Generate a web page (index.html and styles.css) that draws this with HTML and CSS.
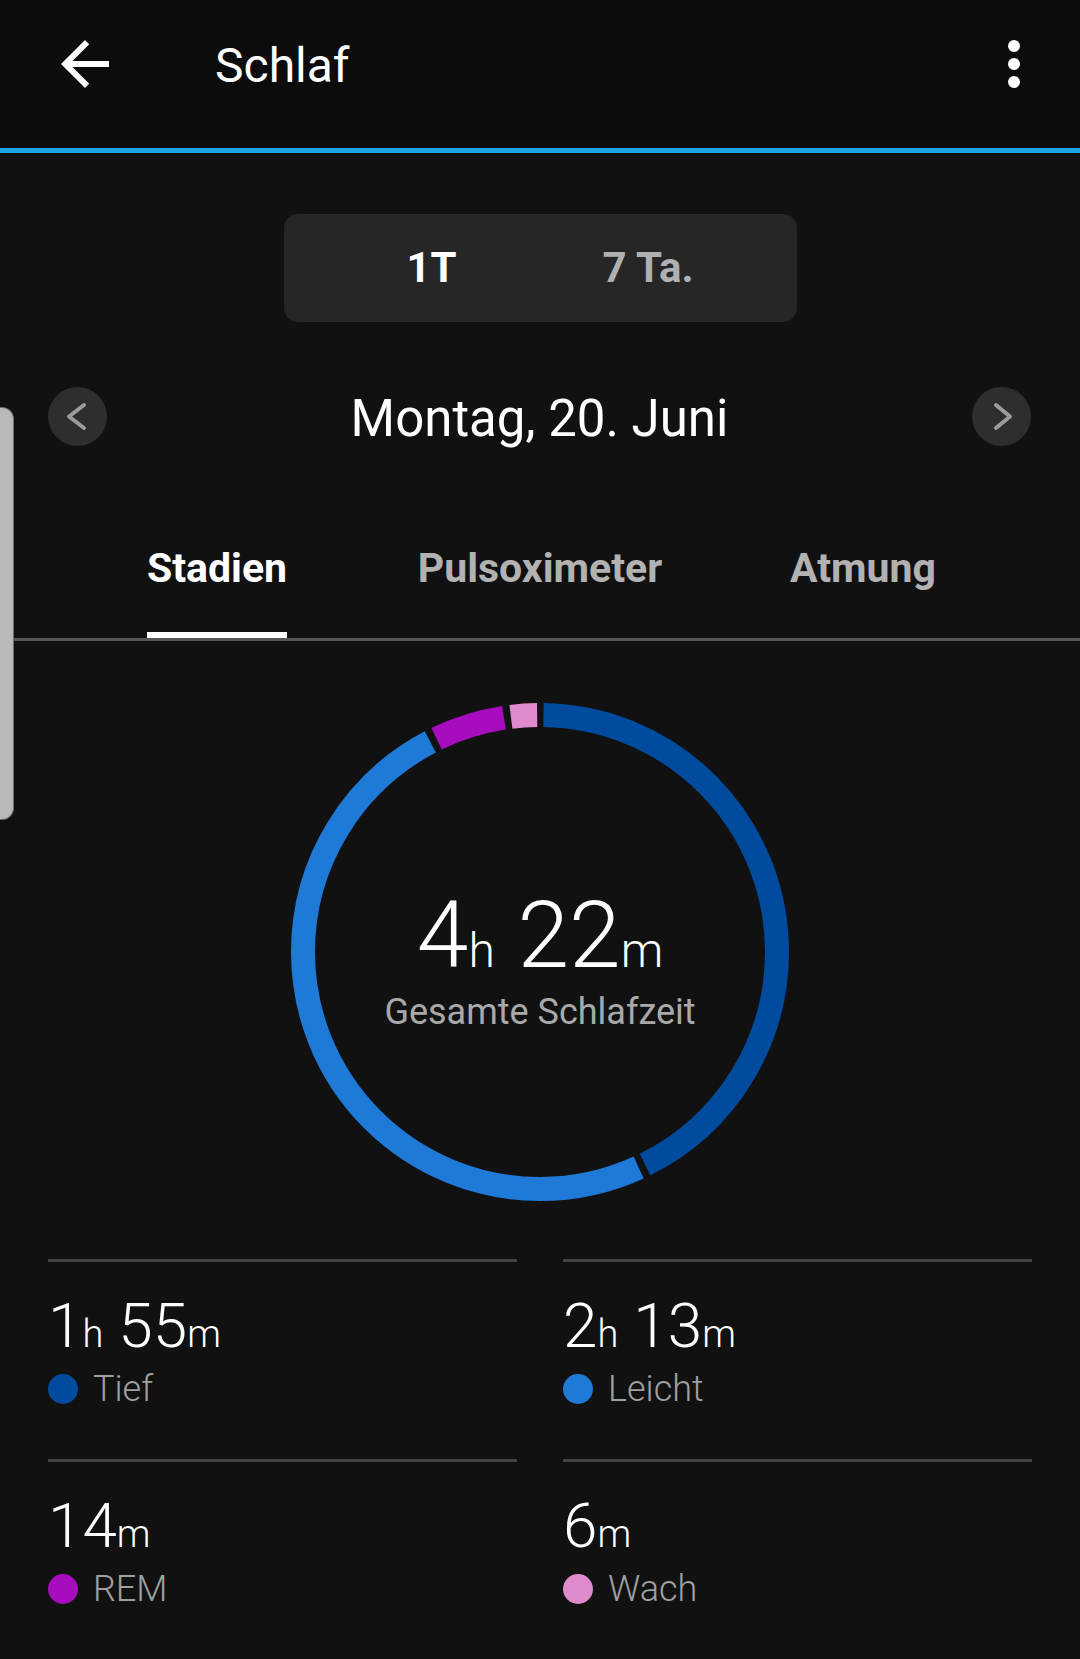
FILE: index.html
```html
<!DOCTYPE html>
<html lang="de">
<head>
<meta charset="utf-8">
<title>Schlaf</title>
<link rel="stylesheet" href="styles.css">
</head>
<body>
<div class="app">
  <header class="appbar">
    <div class="toolbar">
      <svg class="icon back" viewBox="0 0 24 24" width="72" height="72"><path d="M20 11H7.83l5.59-5.59L12 4l-8 8 8 8 1.41-1.41L7.83 13H20v-2z" fill="#fff"/></svg>
      <h1 class="title">Schlaf</h1>
      <svg class="icon menu" viewBox="0 0 24 24" width="72" height="72"><circle cx="12" cy="6" r="2" fill="#fff"/><circle cx="12" cy="12" r="2" fill="#fff"/><circle cx="12" cy="18" r="2" fill="#fff"/></svg>
    </div>
  </header>

  <main class="content">
    <div class="range-toggle">
      <span class="range-opt active">1T</span>
      <span class="range-opt">7 Ta.</span>
    </div>

    <div class="date-nav">
      <div class="nav-btn"><svg viewBox="0 0 59 59" width="59" height="59"><polyline points="36,18 21,29.5 36,41" fill="none" stroke="#9b9b9b" stroke-width="4" stroke-linecap="round" stroke-linejoin="round"/></svg></div>
      <div class="date">Montag, 20. Juni</div>
      <div class="nav-btn"><svg viewBox="0 0 59 59" width="59" height="59"><polyline points="24,18 38,29.5 24,41" fill="none" stroke="#9b9b9b" stroke-width="4" stroke-linecap="round" stroke-linejoin="round"/></svg></div>
    </div>

    <nav class="tabs">
      <div class="tab"><span class="tab-label active">Stadien</span></div>
      <div class="tab"><span class="tab-label">Pulsoximeter</span></div>
      <div class="tab"><span class="tab-label">Atmung</span></div>
    </nav>

    <section class="ring-wrap">
      <svg class="ring" viewBox="0 0 498 498" width="498" height="498">
        <g transform="rotate(-90 249 249)" fill="none" stroke-width="24">
          <circle cx="249" cy="249" r="237" stroke="#004b9e" stroke-dasharray="631.98 1489.11" stroke-dashoffset="-3.5"/>
          <circle cx="249" cy="249" r="237" stroke="#1e79d7" stroke-dasharray="732.00 1489.11" stroke-dashoffset="-642.48"/>
          <circle cx="249" cy="249" r="237" stroke="#a70cbe" stroke-dasharray="70.79 1489.11" stroke-dashoffset="-1381.48"/>
          <circle cx="249" cy="249" r="237" stroke="#df8acd" stroke-dasharray="26.34 1489.11" stroke-dashoffset="-1459.27"/>
        </g>
      </svg>
      <div class="ring-center">
        <div class="total"><span class="num">4</span><span class="unit">h</span> <span class="num">22</span><span class="unit">m</span></div>
        <div class="total-label">Gesamte Schlafzeit</div>
      </div>
    </section>

    <section class="stats">
      <div class="stat">
        <div class="stat-value">1<span class="stat-unit">h</span> 55<span class="stat-unit">m</span></div>
        <div class="legend"><span class="dot deep"></span>Tief</div>
      </div>
      <div class="stat">
        <div class="stat-value">2<span class="stat-unit">h</span> 13<span class="stat-unit">m</span></div>
        <div class="legend"><span class="dot light"></span>Leicht</div>
      </div>
      <div class="stat">
        <div class="stat-value">14<span class="stat-unit">m</span></div>
        <div class="legend"><span class="dot rem"></span>REM</div>
      </div>
      <div class="stat">
        <div class="stat-value">6<span class="stat-unit">m</span></div>
        <div class="legend"><span class="dot awake"></span>Wach</div>
      </div>
    </section>
  </main>

  <div class="side-handle"></div>
</div>
</body>
</html>
```

FILE: styles.css
```css
* { box-sizing: border-box; }

html, body {
  margin: 0;
  padding: 0;
  background: #111111;
}

body {
  width: 1080px;
  height: 1659px;
  overflow: hidden;
  font-family: Roboto, "Liberation Sans", sans-serif;
  color: #ffffff;
}

.app {
  position: relative;
  width: 1080px;
  height: 1659px;
}

/* ---------- app bar ---------- */
.appbar {
  height: 153px;
  background: #0c0c0c;
  border-bottom: 5px solid #1aa5e6;
}

.toolbar {
  height: 128px;
  display: flex;
  align-items: center;
  padding: 0 30px 0 49px;
}

.icon { display: block; flex: none; }

.title {
  flex: 1;
  margin: 0 0 0 94px;
  padding-top: 3px;
  font-size: 48px;
  font-weight: 400;
  line-height: 128px;
  color: #ffffff;
}

/* ---------- range toggle ---------- */
.range-toggle {
  width: 513px;
  height: 108px;
  margin: 61px auto 0;
  padding-left: 20px;
  background: #262626;
  border-radius: 14px;
  display: flex;
  align-items: center;
  justify-content: center;
  gap: 146px;
}

.range-opt {
  font-size: 42px;
  font-weight: 700;
  line-height: 50px;
  color: #b0b0b0;
}

.range-opt.active { color: #ffffff; }

/* ---------- date navigation ---------- */
.date-nav {
  margin-top: 65px;
  height: 59px;
  padding: 0 49px 0 48px;
  display: flex;
  align-items: center;
  justify-content: space-between;
}

.nav-btn {
  width: 59px;
  height: 59px;
  border-radius: 50%;
  background: #2e2e2e;
}

.nav-btn svg { display: block; }

.date {
  font-size: 51px;
  font-weight: 400;
  line-height: 59px;
  padding-top: 3px;
}

/* ---------- tabs ---------- */
.tabs {
  margin-top: 98px;
  display: grid;
  grid-template-columns: repeat(3, 323px);
  justify-content: center;
  border-bottom: 3px solid #575757;
}

.tab { text-align: center; }

.tab-label {
  display: inline-block;
  font-size: 41px;
  font-weight: 700;
  line-height: 48px;
  padding-bottom: 40px;
  border-bottom: 6px solid transparent;
  color: #b2b2b2;
}

.tab-label.active {
  color: #ffffff;
  border-bottom-color: #ffffff;
}

/* ---------- ring ---------- */
.ring-wrap {
  width: 498px;
  height: 498px;
  margin: 62px auto 0;
  display: grid;
}

.ring,
.ring-center {
  grid-area: 1 / 1;
}

.ring { display: block; }

.ring-center {
  align-self: center;
  justify-self: center;
  padding-top: 15px;
  text-align: center;
}

.total {
  font-size: 93px;
  font-weight: 300;
  line-height: 100px;
  color: #ffffff;
  white-space: nowrap;
}

.total .unit {
  font-size: 48px;
  line-height: 1;
}

.total-label {
  margin-top: 4px;
  font-size: 36px;
  font-weight: 400;
  line-height: 44px;
  color: #a9a9a9;
}

/* ---------- stats ---------- */
.stats {
  margin-top: 58px;
  padding: 0 48px;
  display: grid;
  grid-template-columns: 1fr 1fr;
  column-gap: 46px;
}

.stat {
  border-top: 3px solid #424242;
  padding-top: 28px;
  padding-bottom: 48px;
}

.stat-value {
  font-size: 62px;
  font-weight: 300;
  line-height: 72px;
  color: #ffffff;
  white-space: nowrap;
}

.stat-unit {
  font-size: 38px;
  line-height: 1;
}

.legend {
  margin-top: 5px;
  display: flex;
  align-items: center;
  font-size: 36px;
  font-weight: 300;
  line-height: 44px;
  color: #a0a0a0;
}

.dot {
  width: 30px;
  height: 30px;
  border-radius: 50%;
  margin-right: 15px;
  flex: none;
}

.dot.deep { background: #004b9e; }
.dot.light { background: #1e79d7; }
.dot.rem { background: #a70cbe; }
.dot.awake { background: #df8acd; }

/* ---------- overlay edge handle ---------- */
.side-handle {
  position: absolute;
  left: 0;
  top: 407px;
  width: 14px;
  height: 413px;
  background: #b9b9b9;
  border: 1.5px solid #6c6c6c;
  border-left: none;
  border-radius: 0 12px 12px 0;
}
```
